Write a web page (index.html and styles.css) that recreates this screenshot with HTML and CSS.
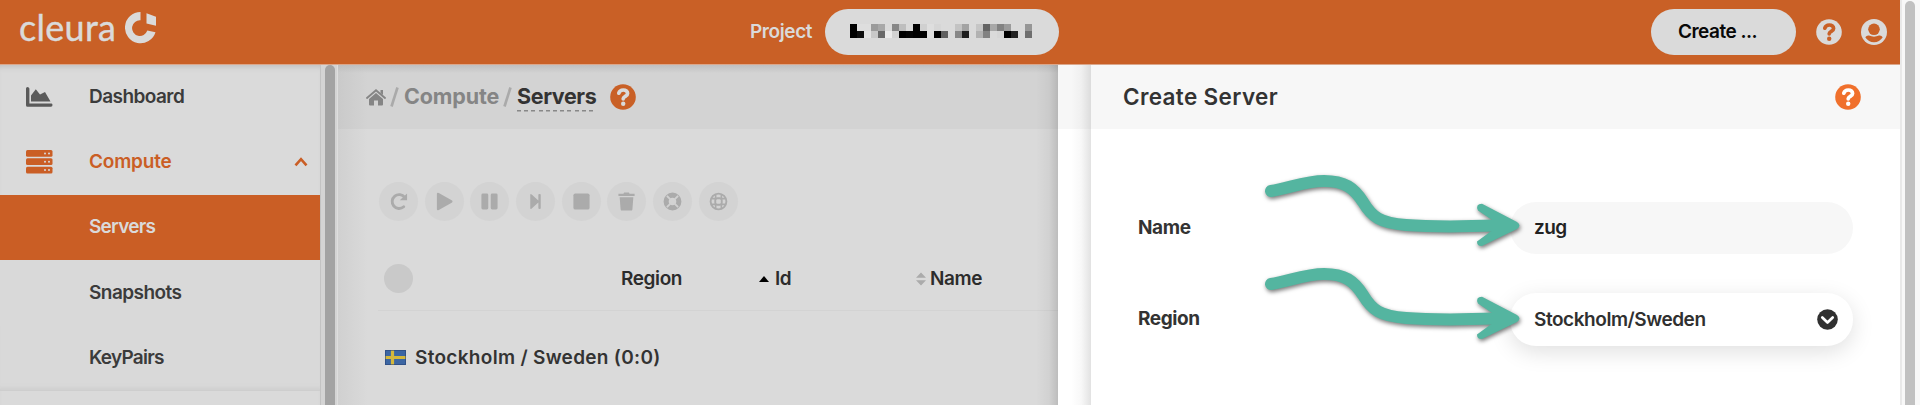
FILE: index.html
```
<!DOCTYPE html>
<html lang="en">
<head>
<meta charset="utf-8">
<title>Cleura – Servers</title>
<link rel="stylesheet" href="styles.css">
</head>
<body>
<svg class="defs" aria-hidden="true">
  <symbol id="help" viewBox="0 0 26 26">
    <circle cx="13" cy="13" r="12.800" fill="currentColor"/>
    <path class="mark" d="M8.800 9.200C9.400 7 11 6 13.300 6c2.600 0 4.300 1.400 4.300 3.400 0 3-4.400 2.900-4.400 5.400"/>
    <circle class="dot" cx="13.200" cy="19.800" r="2.200"/>
  </symbol>
  <symbol id="arrow" viewBox="0 0 264 82">
    <path d="M10 20C28 17 45 10 63 10C84 10 93 17 102 31C111 46 119 52 145 54C175 56.500 205 55.500 240 54.500" fill="none" stroke="#54b5a0" stroke-width="12" stroke-linecap="round"/>
    <path d="M221 32.800L256 51Q261 54.500 256 58L221 75Q216 75.500 216 70.500L231 59.500V49L217 39.500Q214 33 221 32.800Z" fill="#54b5a0"/>
  </symbol>
</svg>
<div class="app">
  <div class="shell">
    <header class="topbar">
      <div class="brand">
        <span class="brand-name">cleura</span>
        <svg class="brand-mark" width="32" height="32" viewBox="0 0 32 32"><path d="M15.500 0V8.300A7.800 7.800 0 1 0 22.300 18.500L30.500 20.200A15.600 15.600 0 1 1 15.500 0Z"/><path d="M21.500 1.300L31 4.800V13.800L21.500 11.500Z"/></svg>
      </div>
      <div class="project">
        <span class="project-label">Project</span>
        <div class="project-pill"><div class="mosaic" id="mosaic"></div></div>
      </div>
      <div class="actions">
        <div class="create">Create ...</div>
        <svg class="help top-help" width="26" height="26"><use href="#help"/></svg>
        <svg class="user" width="26" height="26" viewBox="0 0 26 26"><circle class="lite" cx="13" cy="13" r="13"/><circle class="cut" cx="13" cy="10.300" r="5.800"/><path class="cut" d="M4.300 18.300Q5.500 16.200 8 16.600Q13 18.800 18 16.600Q20.500 16.200 21.700 18.300Q18.500 23.300 13 23.300T4.300 18.300Z"/></svg>
      </div>
    </header>
    <div class="body">
      <nav class="sidebar">
        <div class="item">
          <svg class="nav-icon" width="27" height="20" viewBox="0 0 27 20"><path d="M0 1.500Q0 0 1.500 0T3.400 1.500V16.400H25.500Q26.500 16.400 26.500 18T25 19.800H1.500Q0 19.800 0 18.300ZM5 14.500V8.500L9.800 2.200L14 7.500L19 5L24.500 14.500Z"/></svg>
          <span class="t-dash">Dashboard</span>
        </div>
        <div class="item group">
          <svg class="nav-icon" width="27" height="24" viewBox="0 0 27 24"><rect width="26.500" height="6.800" rx="1.500"/><rect y="8.300" width="26.500" height="6.800" rx="1.500"/><rect y="16.700" width="26.500" height="6.800" rx="1.500"/><g class="led"><circle cx="19" cy="3.500" r="1"/><circle cx="23" cy="3.500" r="1"/><circle cx="19" cy="11.700" r="1"/><circle cx="23" cy="11.700" r="1"/><circle cx="19" cy="20" r="1"/><circle cx="23" cy="20" r="1"/></g></svg>
          <span class="t-compute">Compute</span>
          <svg class="chev" width="14" height="10" viewBox="0 0 14 10"><path d="M1.500 8.300L7 2.200L12.500 8.300"/></svg>
        </div>
        <div class="item active"><span class="t-servers">Servers</span></div>
        <div class="item"><span class="t-snap">Snapshots</span></div>
        <div class="item last"><span class="t-key">KeyPairs</span></div>
      </nav>
      <div class="track side-track"><div class="thumb"></div></div>
      <main class="content">
        <div class="crumbs">
          <svg class="home" width="20" height="17" viewBox="0 0 20 17"><path d="M1 9L10 1.300L19 9" fill="none" stroke="#858585" stroke-width="1.900" stroke-linecap="round"/><path d="M14.500 1H17V6L14.500 4ZM3 10L10 4L17 10V15.500Q17 16.500 16 16.500H12V11.500H8V16.500H4Q3 16.500 3 15.500Z"/></svg>
          <svg class="slash" width="9" height="20" viewBox="0 0 9 20"><path d="M1.500 19.500L7.500 .5"/></svg>
          <span class="crumb">Compute</span>
          <svg class="slash s2" width="9" height="20" viewBox="0 0 9 20"><path d="M1.500 19.500L7.500 .5"/></svg>
          <span class="crumb current">Servers</span>
          <svg class="help dim" width="26" height="26"><use href="#help"/></svg>
        </div>
        <div class="tools">
          <div class="tool"><svg viewBox="0 0 20 20"><path d="M16.500 5.700A7.300 7.300 0 1 0 15.500 15.500" fill="none" stroke="#ababab" stroke-width="3" stroke-linecap="round"/><path d="M19 1.500V8.800H11.300Z"/></svg></div>
          <div class="tool"><svg viewBox="0 0 20 20"><path d="M2 2Q2 0 4 1L18 9Q19 10 18 11L4 19Q2 20 2 18Z"/></svg></div>
          <div class="tool"><svg viewBox="0 0 20 20"><rect x="1.500" y="1.700" width="7.200" height="16.600" rx="1.500"/><rect x="11.300" y="1.700" width="7.200" height="16.600" rx="1.500"/></svg></div>
          <div class="tool"><svg viewBox="0 0 20 20"><path d="M4.500 3Q4.500 1.500 6 2.700L13 9V2.800Q13 2 14.300 2T15.500 2.800V17.200Q15.500 18 14.300 18T13 17.200V11L6 17.300Q4.500 18.500 4.500 17Z"/></svg></div>
          <div class="tool"><svg viewBox="0 0 20 20"><rect x="1.500" y="1.500" width="17" height="17" rx="2"/></svg></div>
          <div class="tool"><svg viewBox="0 0 20 20"><path d="M1.500 1.800H6.800L7.500 .5H12.500L13.200 1.800H18.500V4.200H1.500ZM2.800 5.500H17.200L16.200 18.300Q16 19.600 14.500 19.600H5.500Q4 19.600 3.800 18.300Z"/></svg></div>
          <div class="tool"><svg viewBox="0 0 20 20"><circle class="ring" cx="10" cy="10" r="6.700" stroke-width="5.400"/><path class="gap" d="M4.600 4.600L7 7M15.400 4.600L13 7M4.600 15.400L7 13M15.400 15.400L13 13"/></svg></div>
          <div class="tool"><svg viewBox="0 0 20 20"><circle class="ring" cx="10" cy="10" r="8.300" stroke-width="2"/><rect class="ring" x="6.600" y="6.600" width="6.800" height="6.800" rx="2.200" stroke-width="2"/><path class="ring" stroke-width="1.700" d="M7 2.500V7.500M13 2.500V7.500M7 12.500V17.500M13 12.500V17.500M2.500 7H7.500M2.500 13H7.500M12.500 7H17.500M12.500 13H17.500"/></svg></div>
        </div>
        <div class="thead">
          <i class="check"></i>
          <span class="th th-region">Region</span>
          <svg class="sort-up" width="10" height="6" viewBox="0 0 10 6"><path d="M0 6L5 0L10 6Z"/></svg>
          <span class="th th-id">Id</span>
          <svg class="sort" width="10" height="14" viewBox="0 0 10 14"><path d="M0 5.700L5 .5L10 5.700ZM0 8.300L5 13.500L10 8.300Z"/></svg>
          <span class="th th-name">Name</span>
        </div>
        <div class="row">
          <svg class="flag" width="21" height="15" viewBox="0 0 21 15"><rect width="21" height="15" fill="#3c66a3"/><path d="M0 7.500H21M7.500 0V15" stroke="#d5b83c" stroke-width="3.200"/><rect x=".5" y=".5" width="20" height="14" fill="none" stroke="#263f72" stroke-opacity=".55"/></svg>
          <span class="row-text">Stockholm / Sweden (0:0)</span>
        </div>
      </main>
      <div class="gutter"><div class="gutter-head"></div></div>
      <section class="panel">
        <div class="panel-head"><h1>Create Server</h1><svg class="help bright" width="26" height="26"><use href="#help"/></svg></div>
        <div class="form">
          <div class="field"><label>Name</label><div class="input">zug</div></div>
          <div class="field region"><label class="l-region">Region</label><div class="select"><span>Stockholm/Sweden</span><svg width="21" height="21" viewBox="0 0 21 21"><circle cx="10.500" cy="10.500" r="10.300" fill="#303030"/><path d="M5.300 8.500L10.500 13.500L15.700 8.500" fill="none" stroke="#fff" stroke-width="2.700" stroke-linecap="round" stroke-linejoin="round"/></svg></div></div>
        </div>
      </section>
    </div>
  </div>
  <div class="track page-track"><div class="thumb"></div></div>
  <svg class="arrow" width="264" height="82"><use href="#arrow"/></svg>
  <svg class="arrow second" width="264" height="82"><use href="#arrow"/></svg>
</div>
<script src="mosaic.js"></script>
</body>
</html>
```
FILE: styles.css
```
* { box-sizing: border-box; }
body { margin: 0; font: 600 19px/24px Inter, "Liberation Sans", sans-serif; letter-spacing: -.4px; color: #333; background: #fff; overflow: hidden; }
svg { display: block; flex: none; }
.defs { position: absolute; width: 0; height: 0; }
.app { position: relative; display: flex; width: 1920px; height: 405px; overflow: hidden; }
.shell { display: flex; flex-direction: column; width: 1900px; }

.topbar { position: relative; z-index: 2; display: flex; flex: none; height: 64px; background: #c96026; color: #dadada; box-shadow: 0 1px 0 #dba78b; }
.brand { display: flex; width: 300px; padding: 12px 0 0 19px; }
.brand-name { width: 106px; font: 400 36px/30px Lato, sans-serif; letter-spacing: .3px; -webkit-text-stroke: .4px #dadada; }
.brand-mark { fill: #dadada; }
.project { display: flex; align-items: center; width: 309px; margin-left: 450px; }
.project-label { width: 75px; }
.project-pill { width: 234px; height: 46px; padding: 15px 25px; border-radius: 23px; background: #dadada; }
.mosaic { display: grid; grid-template-columns: repeat(26, 7px); grid-auto-rows: 7px; }
.actions { display: flex; align-items: center; width: 249px; margin-left: auto; }
.create { width: 145px; height: 46px; padding-left: 27px; border-radius: 23px; background: #dadada; color: #080808; line-height: 46px; letter-spacing: -.5px; }
.top-help { margin-left: 20px; color: #dadada; }
.top-help + .user { margin-left: 19px; }
.user .lite { fill: #dadada; }
.user .cut { fill: #c96026; }
.help { overflow: visible; --mark: #fff; }
.mark { fill: none; stroke: var(--mark); stroke-width: 3.700; stroke-linecap: round; }
.dot { fill: var(--mark); }
.top-help { --mark: #c96026; }
.dim { --mark: #dadada; color: #c96026; }
.bright { color: #f0702c; }

.body { display: flex; flex: 1; }
.sidebar { width: 321px; background: #dadada; border-right: 1px solid #c3c3c3; box-shadow: inset 0 7px 6px -5px #b9b9b9; }
.item { display: flex; align-items: center; height: 65.400px; padding-left: 26px; color: #3b3b3b; background: #d9d9d9; }
.item span { margin-left: 63px; letter-spacing: -.55px; }
.item .t-compute { letter-spacing: -.2px; }
.item .t-servers, .item .t-key { letter-spacing: -.75px; }
.item:not(:first-child):not(.group) { padding-left: 0; }
.item:not(:first-child):not(.group) span { margin-left: 89px; }
.item:first-child, .group { background: none; }
.nav-icon { fill: #5a5a5a; }
.item .nav-icon + span { margin-left: 36px; }
.group, .group .nav-icon { color: #ca5e25; fill: #ca5e25; }
.led { fill: #dadada; }
.chev { margin-left: auto; margin-right: 12px; }
.chev path { fill: none; stroke: #ca5e25; stroke-width: 2.600; }
.active { background: #ca5e25 !important; color: #dadada; }
.last { box-shadow: inset 0 -7px 6px -6px #c6c6c6; }
.track { flex: none; background: #d4d4d4; }
.side-track { width: 17px; padding: 1px 2px 0 4px; border-right: 1px solid #dedede; }
.thumb { width: 10px; height: 420px; border-radius: 5px; background: #a3a3a3; }

.content { width: 720px; background: linear-gradient(270deg, #00000022, #0000000a 9px, #0000 22px), linear-gradient(90deg, #d0d0d0, #dadada 30px); }
.crumbs { display: flex; align-items: center; height: 65px; padding-left: 28px; background: linear-gradient(270deg, #00000022, #0000000a 9px, #0000 22px), linear-gradient(#bdbdbd, #d3d3d300 9px), linear-gradient(90deg, #cacaca, #d3d3d3 30px); font-size: 21.500px; }
.home { fill: #858585; margin-top: 2px; }
.slash { margin-left: 4px; margin-right: 5px; }
.slash path { stroke: #aaa; stroke-width: 2.600; }
.crumb { color: #858585; font-weight: 700; letter-spacing: -.15px; margin-top: -2px; }
.crumb.current { color: #333; letter-spacing: -.4px; height: 28px; line-height: 24px; margin-top: 2px; background: repeating-linear-gradient(90deg, #888 0 4px, transparent 4px 7.200px) left bottom / 100% 1.500px no-repeat; }
.s2 { margin-left: 4px; }
.dim { margin-left: 14px; }
.tools { display: flex; gap: 6.700px; padding: 52.500px 0 0 41px; }
.tool { display: grid; place-items: center; width: 39px; height: 39px; border-radius: 50%; background: #d3d3d3; fill: #ababab; }
.tool svg { width: 19px; height: 19px; }
.ring { fill: none; stroke: #ababab; }
.gap { stroke: #d1d1d1; stroke-width: 2; stroke-linecap: round; }
.thead { display: flex; align-items: center; height: 64px; margin: 26px 0 0 40px; padding: 1px 0 0 6px; border-bottom: 1px solid #00000008; color: #2c2c2c; }
.check { width: 29px; height: 29px; border-radius: 50%; background: #c9c9c9; }
.th-region { width: 138px; margin-left: 208px; }
.th-id { width: 141px; margin-left: 6px; }
.sort { fill: #ababab; }
.th-name { margin-left: 4px; }
.row { display: flex; align-items: center; padding: 35px 0 0 47px; }
.row-text { margin-left: 9px; letter-spacing: .3px; }

.gutter { width: 33px; background: linear-gradient(90deg, #fff 40%, #f8f8f8 70%, #e2e2e2); }
.gutter-head { height: 65px; background: linear-gradient(90deg, #f7f7f7 40%, #f0f0f0 70%, #dcdcdc); }
.panel { width: 809px; background: #fff; }
.panel-head { display: flex; align-items: center; justify-content: space-between; height: 65px; padding: 0 39px 0 32px; background: #f7f7f7; }
h1 { margin: 0; font-size: 22.500px; font-weight: 600; line-height: 28px; letter-spacing: .35px; }
.form { padding: 72.500px 47px 0; }
.field { display: flex; align-items: center; justify-content: space-between; }
label { font-weight: 700; }
.input, .select { width: 343px; height: 52px; padding-left: 24px; border-radius: 26px; background: #f7f7f7; line-height: 51px; color: #222; letter-spacing: -.6px; }
.region { margin-top: 39px; }
.select { display: flex; align-items: center; justify-content: space-between; height: 53px; padding-right: 15px; background: #fff; color: #303030; box-shadow: 0 6px 22px #00000020; letter-spacing: -.45px; }
.page-track { width: 20px; padding: 1px 5px 0; background: #f8f8f8; border-left: 2px solid #e9e9e9; padding-left: 3px; }
.page-track .thumb { background: #c1c1c1; }
.arrow { position: absolute; left: 1261px; top: 171px; overflow: visible; filter: drop-shadow(1px 2px 2px #0008); }
.second { top: 264px; }
```
FILE: mosaic.js
```
// Grey levels of the masked project name, two rows of 26 cells.
var rows = [
  [0,222,222,155,168,218,135,190,218,0,208,222,214,218,218,195,163,218,198,100,168,130,155,218,218,150],
  [0,15,228,200,105,235,210,0,5,0,0,222,0,95,218,135,30,218,178,130,218,214,0,35,218,110]
];
var box = document.getElementById("mosaic");
rows.forEach(function (row) {
  row.forEach(function (v) {
    var cell = document.createElement("i");
    cell.style.background = "rgb(" + v + "," + v + "," + v + ")";
    box.appendChild(cell);
  });
});
```
